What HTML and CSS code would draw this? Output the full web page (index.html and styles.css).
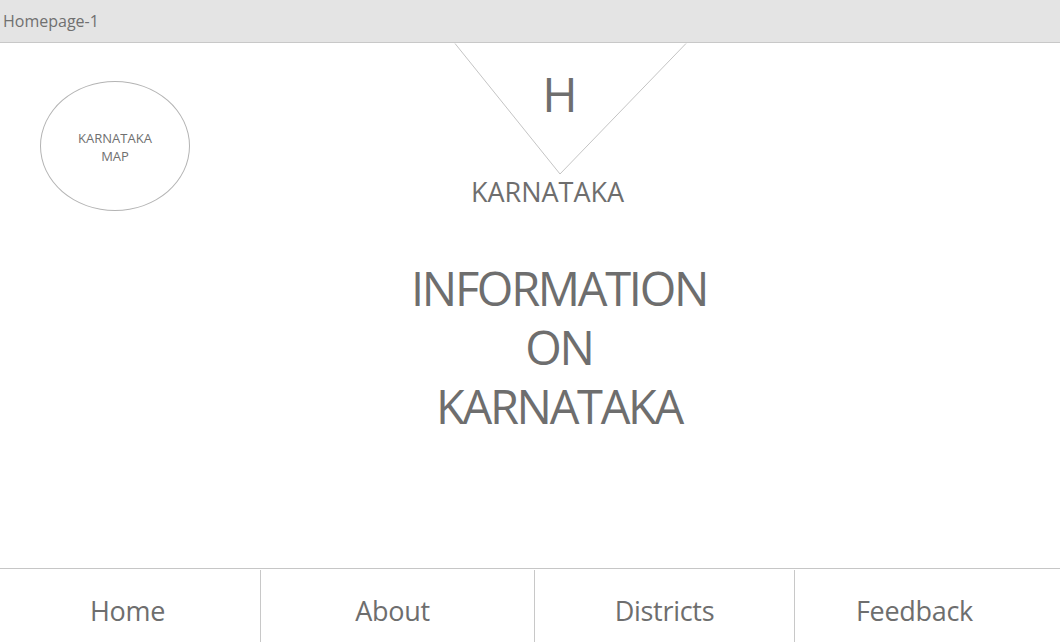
FILE: index.html
```html
<!DOCTYPE html>
<html>
<head>
<meta charset="utf-8">
<link rel="stylesheet" href="styles.css">
</head>
<body>
<div class="page">
  <header class="titlebar">Homepage-1</header>
  <main class="main">
    <div class="top">
      <div class="map">KARNATAKA<br>MAP</div>
      <div class="brand">
        <div class="logo">
          <svg class="tri" width="262" height="131" viewBox="0 0 262 131"><polyline points="26,0.5 131,131 257,0.5" fill="none" stroke="#c4c4c4" stroke-width="1"/></svg>
          <span class="logo-letter">H</span>
        </div>
        <div class="state">KARNATAKA</div>
      </div>
    </div>
    <h1 class="hero">INFORMATION<br>ON<br>KARNATAKA</h1>
  </main>
  <nav class="nav">
    <a class="tab tab-home">Home</a>
    <a class="tab tab-about">About</a>
    <a class="tab tab-districts">Districts</a>
    <a class="tab tab-feedback">Feedback</a>
  </nav>
</div>
</body>
</html>
```
FILE: styles.css
```css
html, body {
  margin: 0;
  padding: 0;
  background: #fff;
}
body {
  font-family: "Open Sans", "Noto Sans", sans-serif;
  color: #6e6e6e;
}
.page {
  width: 1060px;
  height: 642px;
  display: flex;
  flex-direction: column;
  overflow: hidden;
}
.titlebar {
  box-sizing: border-box;
  background: #e4e4e4;
  border-bottom: 1px solid #c8c8c8;
  height: 43px;
  padding-left: 3px;
  font-size: 16px;
  line-height: 42px;
  color: #707070;
}
.main {
  flex: 1;
  display: flex;
  flex-direction: column;
}
.top {
  display: flex;
  align-items: flex-start;
}
.map {
  margin: 38px 0 0 40px;
  width: 150px;
  height: 130px;
  box-sizing: border-box;
  border: 1px solid #b4b4b4;
  border-radius: 50%;
  display: flex;
  align-items: center;
  justify-content: center;
  text-align: center;
  font-size: 13px;
  line-height: 18px;
  color: #707070;
  padding-top: 2px;
}
.brand {
  margin-left: 239px;
  width: 262px;
  display: flex;
  flex-direction: column;
}
.logo {
  position: relative;
  height: 131px;
  text-align: center;
}
.tri {
  position: absolute;
  left: 0;
  top: 0;
}
.logo-letter {
  position: relative;
  display: inline-block;
  font-size: 48px;
  line-height: 60px;
  margin-top: 21px;
  color: #6e6e6e;
}
.state {
  margin-top: 1px;
  padding-right: 25px;
  text-align: center;
  font-size: 27px;
  line-height: 34px;
}
.hero {
  margin: 48px 0 0 0;
  padding-left: 58px;
  text-align: center;
  font-weight: normal;
  font-size: 47px;
  letter-spacing: -2.3px;
  line-height: 59px;
  color: #6e6e6e;
}
.nav {
  height: 74px;
  box-sizing: border-box;
  border-top: 1px solid #c6c6c6;
  display: grid;
  grid-template-columns: 260px 274px 260px 266px;
  padding-top: 1px;
}
.tab {
  display: flex;
  align-items: center;
  justify-content: center;
  font-size: 27px;
  letter-spacing: -0.3px;
  color: #6e6e6e;
  padding-top: 8px;
}
.tab + .tab {
  border-left: 1px solid #c8c8c8;
}
.tab-home {
  padding-right: 5px;
}
.tab-about {
  padding-right: 10px;
}
.tab-feedback {
  padding-right: 26px;
}
```
